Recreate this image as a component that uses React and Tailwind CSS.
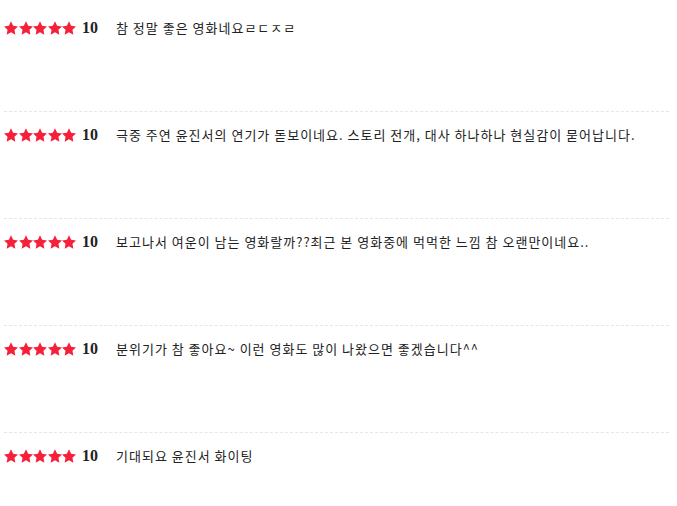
const reviews = [
  "참 정말 좋은 영화네요ㄹㄷㅈㄹ",
  "극중 주연 윤진서의 연기가 돋보이네요. 스토리 전개, 대사 하나하나 현실감이 묻어납니다.",
  "보고나서 여운이 남는 영화랄까??최근 본 영화중에 먹먹한 느낌 참 오랜만이네요..",
  "분위기가 참 좋아요~ 이런 영화도 많이 나왔으면 좋겠습니다^^",
  "기대되요 윤진서 화이팅",
];

function Star() {
  return (
    <svg width="14" height="14" viewBox="0 0 24 24" className="shrink-0">
      <path
        fill="#f5213a"
        d="M12 .587l3.668 7.568 8.332 1.151-6.064 5.828 1.48 8.279L12 19.446l-7.416 3.967 1.48-8.279L0 9.306l8.332-1.151z"
      />
    </svg>
  );
}

export default function App() {
  return (
    <div className="w-[677px] h-[506px] bg-white overflow-hidden pt-[5px] pl-[4px]">
      <ul className="w-[665px]">
        {reviews.map((r, i) => (
          <li
            key={i}
            className={
              "h-[107px] pt-[14px] " +
              (i < reviews.length - 1 ? "border-b border-dashed border-[#e6e6e6]" : "")
            }
          >
            <div className="flex items-center h-[18px]">
              <div className="flex gap-[0.6px] w-[73px]">
                <Star />
                <Star />
                <Star />
                <Star />
                <Star />
              </div>
              <span
                className="ml-[5px] w-[34px] text-[16px] font-bold text-[#222] leading-none"
                style={{ fontFamily: '"Liberation Serif", serif' }}
              >
                10
              </span>
              <span
                className="text-[13px] text-[#222] tracking-[1px]"
                style={{ fontFamily: '"Noto Sans CJK KR", "Noto Sans", sans-serif' }}
              >
                {r}
              </span>
            </div>
          </li>
        ))}
      </ul>
    </div>
  );
}
